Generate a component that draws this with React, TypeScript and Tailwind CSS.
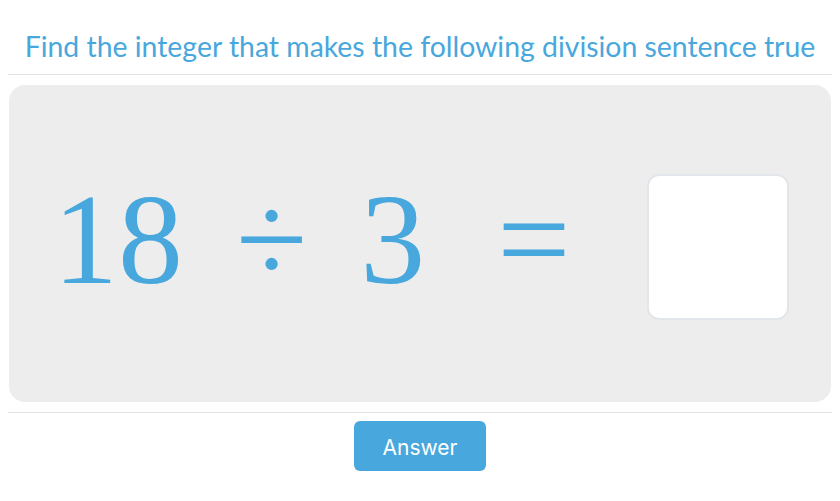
import React from "react";

export default function App() {
  return (
    <div className="w-[840px] h-[501px] bg-white px-2 overflow-hidden">
      <div className="h-[75px] pt-[19px] flex items-center justify-center border-b border-[#e3e3e3]">
        <h1 className="text-[28.4px] text-[#48a7dc] leading-none font-['Lato',sans-serif]">
          Find the integer that makes the following division sentence true
        </h1>
      </div>
      <div className="mt-[10px] mx-px h-[317px] rounded-[16px] bg-[#ededed] flex items-center pl-[44px]">
        <div className="flex items-center text-[#48a7dc] text-[130px] leading-none font-['Liberation_Serif','Times_New_Roman',serif]">
          <span className="mt-[-10px]">18</span>
          <span className="ml-[53px] mt-[-10px]">÷</span>
          <span className="ml-[53px] mt-[-10px]">3</span>
          <span className="ml-[72px] mt-[-10px]">=</span>
        </div>
        <div className="ml-[76px] mt-[6px] w-[142px] h-[146px] bg-white border-2 border-[#e2e6ea] rounded-[12px]"></div>
      </div>
      <div className="mt-[10px] border-t border-[#e3e3e3] flex justify-center pt-[8px]">
        <button className="w-[132px] h-[50px] rounded-[6px] bg-[#48a7dc] text-white text-[21px] pt-[4px] font-['Inter',sans-serif]">
          Answer
        </button>
      </div>
    </div>
  );
}
